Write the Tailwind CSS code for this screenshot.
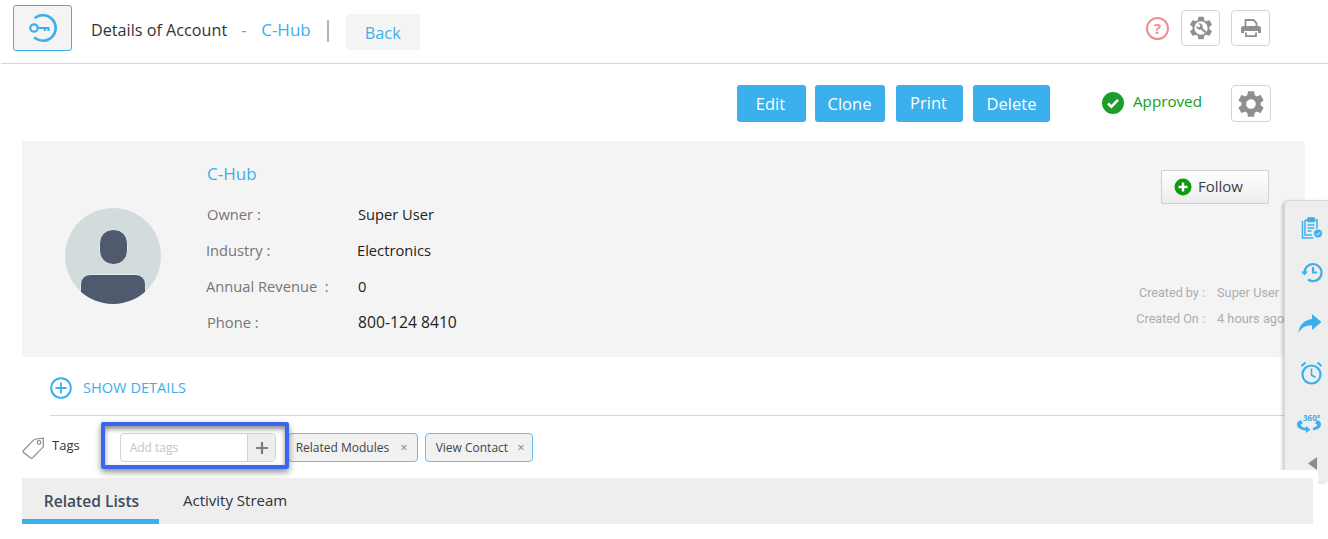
<!DOCTYPE html>
<html>
<head>
<meta charset="utf-8">
<script src="https://cdn.jsdelivr.net/npm/@tailwindcss/browser@4"></script>
</head>
<body class="bg-white overflow-hidden">
<div class="relative w-[1328px] h-[539px] overflow-hidden font-['Open_Sans',sans-serif] text-[#222]">

  <!-- header -->
  <header class="h-[64px] ml-px border-b border-[#d6d6d6] flex items-start pl-3 pr-[58px]">
    <div class="mt-[5px] w-[59px] h-[46px] rounded-[3px] border border-[#3bb0ec] bg-[#f4f4f4] flex items-center justify-center">
      <svg width="30" height="30" viewBox="0 0 30 30" fill="none" stroke="#3bb0ec">
        <path d="M7.500 4.500A12.800 12.800 0 1 1 7 25" stroke-width="2.600" stroke-linecap="round"/>
        <circle cx="6" cy="15" r="3.700" stroke-width="2.200"/>
        <path d="M9.500 15H21.500M16.800 15V18M20.500 15V18" stroke-width="2.200"/>
      </svg>
    </div>
    <div class="ml-[19px] mt-[19px] text-[16.200px] leading-[22px] text-[#333]">Details of Account</div>
    <div class="ml-[14px] mt-[19px] w-[5px] text-[16px] leading-[22px] text-[#3bb0ec]">-</div>
    <div class="ml-[15px] mt-[19px] text-[17px] leading-[22px] text-[#3bb0ec]">C-Hub</div>
    <div class="ml-4 mt-[20px] w-[2px] h-[22px] bg-[#b5b5b5]"></div>
    <div class="ml-[17px] mt-[14px] w-[74px] h-[36px] rounded-[3px] bg-[#f4f4f4] text-[16.300px] text-[#3bb0ec] flex items-center justify-center pt-[2px]">Back</div>
    <div class="ml-auto mt-[17px] mr-[12px] w-[23px] h-[23px] rounded-full border-2 border-[#f48c8c] text-[#f48c8c] text-[15px] font-bold leading-none flex items-center justify-center">?</div>
    <div class="mt-[10px] w-[39px] h-[36px] rounded-[4px] border border-[#d4d4d4] flex items-center justify-center">
      <svg width="28" height="28" viewBox="0 0 24 24">
        <path fill="#8f8f8f" fill-rule="evenodd" d="M19.140 12.940c.04-.3.06-.61.06-.94 0-.32-.02-.64-.07-.94l2.030-1.580c.18-.14.23-.41.12-.61l-1.920-3.320c-.12-.22-.37-.29-.59-.22l-2.390.96c-.5-.38-1.030-.7-1.620-.94l-.36-2.540c-.04-.24-.24-.41-.48-.41h-3.840c-.24 0-.43.17-.47.41l-.36 2.540c-.59.24-1.130.57-1.620.94l-2.390-.96c-.22-.08-.47 0-.59.22L2.740 8.870c-.12.21-.08.47.12.61l2.030 1.580c-.05.3-.09.63-.09.94s.02.64.07.94l-2.030 1.580c-.18.14-.23.41-.12.61l1.920 3.320c.12.22.37.29.59.22l2.390-.96c.5.38 1.030.7 1.620.94l.36 2.540c.05.24.24.41.48.41h3.840c.24 0 .44-.17.47-.41l.36-2.540c.59-.24 1.130-.56 1.620-.94l2.390.96c.22.08.47 0 .59-.22l1.920-3.320c.12-.22.07-.47-.12-.61l-2.010-1.580zM12 6.300a5.700 5.700 0 1 0 0 11.400 5.700 5.700 0 0 0 0-11.400z"/>
        <path fill="#8f8f8f" d="M8.200 9.600a3 3 0 0 0 3.900 3.700l3.200 3.300 1.400-1.400-3.300-3.200a3 3 0 0 0-3.700-3.900l1.800 1.800-.6 1.300-1.300.2z"/>
      </svg>
    </div>
    <div class="ml-[11px] mt-[10px] w-[39px] h-[36px] rounded-[4px] border border-[#d4d4d4] flex items-center justify-center">
      <svg width="20" height="18" viewBox="0 0 20 18">
        <path fill="none" stroke="#8f8f8f" stroke-width="1.800" d="M4.500 8V1h8l3 3v4M5 13.500v3.600h10v-3.600"/>
        <path fill="#8f8f8f" d="M2.500 7h15A2.500 2.500 0 0 1 20 9.500V14h-3v-2H3v2H0V9.500A2.500 2.500 0 0 1 2.500 7z"/>
      </svg>
    </div>
  </header>

  <!-- action row -->
  <div class="mt-[21px] h-[38px] flex items-start pl-[737px] text-white text-[16.500px]">
    <button class="w-[69px] h-[37px] rounded-[3px] bg-[#3bb0ec] pt-[2px] pr-[2px]">Edit</button>
    <button class="ml-[9px] w-[70px] h-[37px] rounded-[3px] bg-[#3bb0ec] pt-[2px] pr-px">Clone</button>
    <button class="ml-[11px] w-[67px] h-[37px] rounded-[3px] bg-[#3bb0ec] pr-[2px]">Print</button>
    <button class="ml-[10px] w-[77px] h-[37px] rounded-[3px] bg-[#3bb0ec] pt-[2px]">Delete</button>
    <div class="ml-[52px] mt-[7px] w-[22px] h-[22px] rounded-full bg-[#1b9c2c] flex items-center justify-center">
      <svg width="14" height="14" viewBox="0 0 14 14" fill="none" stroke="#fff" stroke-width="2.600"><path d="M2 7.500l3.400 3.200L12 3.800"/></svg>
    </div>
    <div class="ml-[9px] mt-[5px] w-[69px] whitespace-nowrap text-[15.200px] leading-[22px] text-[#12a017]">Approved</div>
    <div class="ml-[29px] w-[40px] h-[37px] rounded-[4px] border border-[#d4d4d4] flex items-center justify-center">
      <svg width="32" height="32" viewBox="0 0 24 24" class="shrink-0">
        <path fill="#8f8f8f" d="M19.140 12.940c.04-.3.06-.61.06-.94 0-.32-.02-.64-.07-.94l2.030-1.580c.18-.14.23-.41.12-.61l-1.920-3.320c-.12-.22-.37-.29-.59-.22l-2.390.96c-.5-.38-1.030-.7-1.620-.94l-.36-2.540c-.04-.24-.24-.41-.48-.41h-3.840c-.24 0-.43.17-.47.41l-.36 2.540c-.59.24-1.130.57-1.620.94l-2.390-.96c-.22-.08-.47 0-.59.22L2.740 8.870c-.12.21-.08.47.12.61l2.030 1.580c-.05.3-.09.63-.09.94s.02.64.07.94l-2.030 1.580c-.18.14-.23.41-.12.61l1.920 3.320c.12.22.37.29.59.22l2.390-.96c.5.38 1.030.7 1.620.94l.36 2.540c.05.24.24.41.48.41h3.840c.24 0 .44-.17.47-.41l.36-2.540c.59-.24 1.130-.56 1.620-.94l2.390.96c.22.08.47 0 .59-.22l1.920-3.320c.12-.22.07-.47-.12-.61l-2.010-1.580zM12 15.600c-1.980 0-3.600-1.620-3.600-3.600s1.620-3.600 3.600-3.600 3.600 1.620 3.600 3.600-1.620 3.600-3.600 3.600z"/>
      </svg>
    </div>
  </div>

  <!-- card -->
  <section class="mt-[18px] ml-[22px] w-[1283px] h-[216px] bg-[#f4f4f4] flex items-start">
    <div class="ml-[43px] mt-[67px] w-[96px] h-[96px] rounded-full bg-[#d3dcdc] overflow-hidden flex flex-col items-center shrink-0">
      <div class="mt-[21px] w-[29px] h-[36px] shrink-0 rounded-[14px] bg-[#4f5a6e] border border-[#e4eaea]"></div>
      <div class="mt-[9px] w-[66px] h-[40px] shrink-0 rounded-t-[10px] bg-[#4f5a6e] border border-[#e4eaea]"></div>
    </div>
    <div class="ml-[45px] mt-[21px] w-[300px] text-[14.700px]">
      <div class="text-[17px] leading-[24px] text-[#3bb0ec] ml-px">C-Hub</div>
      <div class="mt-[18px] h-[20px] leading-[20px] flex"><span class="w-[152px] pl-px text-[#757575]">Owner :</span><span>Super User</span></div>
      <div class="mt-[16px] h-[20px] leading-[20px] flex"><span class="w-[151px] text-[#757575]">Industry :</span><span>Electronics</span></div>
      <div class="mt-[16px] h-[20px] leading-[20px] flex"><span class="w-[152px] text-[#757575]">Annual Revenue&nbsp; :</span><span>0</span></div>
      <div class="mt-[16px] h-[20px] leading-[20px] flex"><span class="w-[152px] pl-px text-[#757575]">Phone :</span><span class="text-[15.700px]">800-124 8410</span></div>
    </div>
    <div class="ml-auto w-[170px] shrink-0 h-full">
      <div class="mt-[29px] ml-[26px] w-[108px] h-[34px] rounded-[2px] border border-[#d0d0d0] bg-linear-to-b from-[#ffffff] to-[#ececec] flex items-center pl-3">
        <svg width="18" height="18" viewBox="0 0 18 18"><circle cx="9" cy="9" r="8.500" fill="#0b9a10"/><path d="M9 4.500v9M4.500 9h9" stroke="#fff" stroke-width="2.400"/></svg>
        <span class="ml-[6px] text-[15px] leading-[20px] -mt-[2px] text-[#3a3f4a]">Follow</span>
      </div>
      <div class="mt-[81px] font-['Roboto',sans-serif] text-[12.600px] text-[#adadad] leading-[16px]">
        <div class="flex"><span class="w-[70px] whitespace-nowrap text-right">Created by :</span><span class="ml-3 text-[12.800px] whitespace-nowrap">Super User</span></div>
        <div class="flex mt-[10px]"><span class="w-[70px] text-right whitespace-nowrap">Created On :</span><span class="ml-3 text-[12.800px] whitespace-nowrap">4 hours ago</span></div>
      </div>
    </div>
  </section>

  <!-- show details -->
  <div class="mt-[20px] ml-[50px] h-[22px] flex items-center text-[#3bb0ec]">
    <svg width="22" height="22" viewBox="0 0 22 22" fill="none" stroke="#3bb0ec" stroke-width="2"><circle cx="11" cy="11" r="9.800"/><path d="M11 5.500v11M5.500 11h11" stroke-width="1.800"/></svg>
    <span class="ml-[11px] text-[14.600px] font-normal">SHOW DETAILS</span>
  </div>
  <div class="mt-[16px] ml-[50px] w-[1234px] h-px bg-[#d6d6d6]"></div>

  <!-- tags -->
  <div class="mt-[17px] h-[29px] ml-[22px] flex items-center">
    <svg width="24" height="24" viewBox="0 0 24 24" fill="none" stroke="#8c8c8c" stroke-width="1.200"><path d="M1.500 14.500L12.500 3.200l8.800-1v8.600L10.500 21.800a1.500 1.500 0 0 1-2.100 0L1.500 16.500a1.500 1.500 0 0 1 0-2z"/><circle cx="17" cy="6.500" r="1.800"/></svg>
    <span class="ml-[6px] text-[13px] text-[#333] -mt-[3px]">Tags</span>
    <div class="ml-[40px] w-[156px] h-[29px] rounded-[4px] border border-[#d2d2d2] bg-white flex overflow-hidden">
      <span class="flex-1 pl-[9px] text-[12px] leading-[27px] text-[#c4c4c4]">Add tags</span>
      <span class="w-[28px] pl-px bg-[#eeeeee] border-l border-[#d2d2d2] flex items-center justify-center">
        <svg width="14" height="14" viewBox="0 0 14 14"><path d="M7 1v12M1 7h12" stroke="#7d7d7d" stroke-width="2.200"/></svg>
      </span>
    </div>
    <div class="ml-3 w-[130px] h-[29px] rounded-[4px] border border-[#5cc3ee] bg-[#f1f1f1] flex items-center pl-[7px] text-[12px] text-[#444]"><span>Related Modules</span><span class="ml-auto mr-[9px] text-[13px] text-[#888]">×</span></div>
    <div class="ml-[7px] w-[108px] h-[29px] rounded-[4px] border border-[#5cc3ee] bg-[#f1f1f1] flex items-center pl-[10px] text-[12px] text-[#444]"><span>View Contact</span><span class="ml-auto mr-[7px] text-[13px] text-[#888]">×</span></div>
  </div>

  <!-- tabs -->
  <div class="relative z-10 mt-4 ml-[22px] w-[1291px] h-[46px] bg-[#eeeeee] flex items-stretch text-[15px]">
    <div class="w-[137px] border-b-[5px] border-[#3bb0ec] pt-[6px] pl-[2px] flex items-center justify-center text-[15.600px] font-semibold text-[#3e4b5b]">Related Lists</div>
    <div class="ml-6 pb-[2px] flex items-center text-[#2a3340]">Activity Stream</div>
  </div>

  <!-- highlight -->
  <div class="absolute left-[101px] top-[422px] w-[188px] h-[47px] border-[4px] border-[#3b67f0] rounded-[2px] shadow-[0_3px_6px_rgba(0,0,0,.45),inset_0_3px_5px_rgba(0,0,0,.45)]"></div>

  <!-- side panel -->
  <aside class="absolute left-[1284px] top-[200px] w-[44px] h-[282px] bg-[#eeeeee] rounded-tl-[6px] border-l border-t border-[#d8d8d8] shadow-[-2px_1px_3px_rgba(0,0,0,.18)] flex flex-col items-center">
    <svg class="mt-[16px] ml-[11px]" width="22" height="22" viewBox="0 0 22 22" fill="none" stroke="#3bb0ec" stroke-width="1.500"><path d="M1.500 4v17h11"/><path d="M4 3h12v9M4 3v15h7"/><path d="M7 1h6v3.500H7z" fill="#3bb0ec"/><path d="M6.500 8h7M6.500 11h7M6.500 14h4"/><circle cx="17" cy="16.500" r="4.500" fill="#3bb0ec" stroke="#eee" stroke-width="1"/><path d="M15 16.500l1.500 1.500 2.500-2.800" stroke="#fff" stroke-width="1"/></svg>
    <svg class="mt-[22px] ml-[10px]" width="22" height="22" viewBox="0 0 22 22" fill="none" stroke="#3bb0ec" stroke-width="2.200"><path d="M3.500 12A8.500 8.500 0 1 1 7 18.500"/><path d="M12 6v5.500h4"/><path d="M0 10.500h7l-3.500 4z" fill="#3bb0ec" stroke="none"/></svg>
    <svg class="mt-[31px] ml-[7px]" width="24" height="19" viewBox="0 0 24 19"><path fill="#3bb0ec" d="M14 0l9.500 8L14 16v-4.500C8 11.500 3.500 13 .5 19c.5-8 5.500-13 13.500-14z"/></svg>
    <svg class="mt-[28px] ml-[10px]" width="23" height="24" viewBox="0 0 23 24" fill="none" stroke="#3bb0ec" stroke-width="2.200"><circle cx="11.500" cy="13.500" r="9"/><path d="M11.500 7.500v6.500l4 2.500" stroke-width="1.600"/><path d="M1.500 5l4-3.500M21.500 5l-4-3.500" stroke-width="2.200"/></svg>
    <div class="relative mt-[30px] ml-[5px] w-[24px] h-[18px]">
      <span class="absolute left-[6px] -top-[1px] text-[8px] leading-[8px] font-bold text-[#3bb0ec]">360°</span>
      <svg class="absolute left-0 top-[5px]" width="24" height="13" viewBox="0 0 24 13"><path d="M0 4c0-1.800 1.500-3 4-4L6 3.500C4 3.800 3.500 4.500 4 5.500 4.800 7 6.500 7.500 9 8V6l4.500 3.500L9 13v-2.500C3.500 10 0 8 0 4zM24 4c0-1.800-1.500-3-4-4l-2 3.500c2 .3 2.500 1 2 2-.8 1.300-2.500 2-4 2.300v2.500C21 9.800 24 7.500 24 4z" fill="#3bb0ec"/></svg>
    </div>
    <svg class="mt-[24px] ml-[11px]" width="9" height="13" viewBox="0 0 9 13"><path d="M9 0v13L0 6.500z" fill="#8d8d8d"/></svg>
  </aside>
  <div class="absolute left-[1280px] top-[470px] w-[38px] h-[20px] bg-white"></div>
</div>
</body>
</html>
